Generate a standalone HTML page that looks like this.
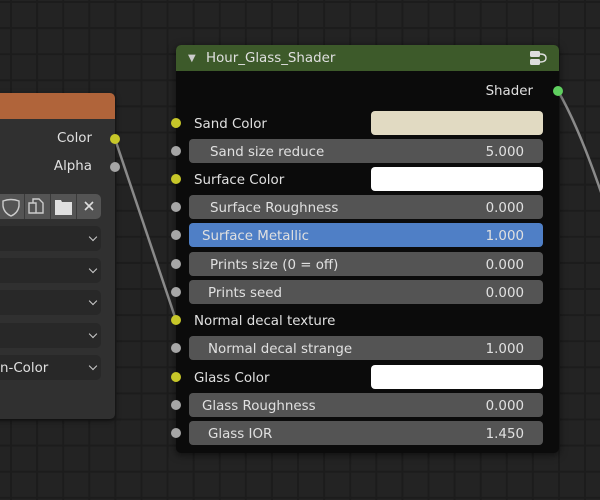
<!DOCTYPE html>
<html><head><style>
*{margin:0;padding:0;box-sizing:border-box}
body{width:600px;height:500px;overflow:hidden;position:relative;font-family:"DejaVu Sans","Liberation Sans",sans-serif;font-size:13.4px;color:#e0e0e0;
background-color:#232323;
background-image:linear-gradient(to right,#1c1c1c 2px,transparent 2px),linear-gradient(to bottom,#1c1c1c 2px,transparent 2px);
background-size:26.1px 26.1px;background-position:10px 1px}
.abs{position:absolute}
.sock{position:absolute;width:10px;height:10px;border-radius:50%;background:#a6a6a6}
.y{background:#c7c729}
.f{position:absolute;left:189px;width:354px;height:24px;border-radius:4px;background:#545454;line-height:27px}
.f .l{position:absolute;left:21px}
.f .v{position:absolute;right:19px}
.lab{position:absolute;left:194px;line-height:27px}
.sw{position:absolute;left:371px;width:172px;height:24px;border-radius:4px;background:#fff}
.dd{position:absolute;left:-6px;width:107px;height:25px;border-radius:5px;background:#282828;line-height:27px}
.dd:after{content:"";position:absolute;right:5px;top:8px;width:5px;height:5px;border-right:1.6px solid #ccc;border-bottom:1.6px solid #ccc;transform:rotate(45deg)}
</style></head><body>
<svg class="abs" style="left:0;top:0" width="600" height="500">
<path d="M115 139 L176 320" stroke="#8a8a8a" stroke-width="2.5" fill="none"/>
<path d="M558 91 C575 120 590 160 602 195" stroke="#8a8a8a" stroke-width="2.5" fill="none"/>
</svg>
<div class="abs" style="left:-10px;top:93px;width:125px;height:326px;background:#303030;border-radius:5px;box-shadow:0 2px 6px rgba(0,0,0,.5)"></div>
<div class="abs" style="left:-10px;top:93px;width:125px;height:26px;background:#b0643a;border-radius:5px 5px 0 0"></div>
<div class="abs" style="right:508px;top:131px">Color</div>
<div class="abs" style="right:508px;top:159px">Alpha</div>
<div class="sock y" style="left:110px;top:134px"></div>
<div class="sock" style="left:110px;top:162px"></div>
<div class="abs" style="left:-6px;top:194px;width:107px;height:25px;background:#545454;border-radius:5px"></div>
<div class="abs" style="left:24px;top:194px;width:1px;height:25px;background:#3a3a3a"></div>
<div class="abs" style="left:50px;top:194px;width:1px;height:25px;background:#3a3a3a"></div>
<div class="abs" style="left:76px;top:194px;width:1px;height:25px;background:#3a3a3a"></div>
<svg class="abs" style="left:0;top:194px" width="101" height="25">
<path d="M3 7 Q11 4 19 7 L19 12 Q18 19 11 22 Q4 19 3 12Z" stroke="#ccc" stroke-width="1.4" fill="none"/>
<path d="M29 9 h7 v10 h-7z M33 9 v-4 h6 l4 4 v10 h-7" stroke="#ccc" stroke-width="1.4" fill="none"/>
<path d="M55 6 h6 l1 2 h10 v13 h-17z" fill="#e0e0e0"/>
<path d="M85 8 l8 8 M93 8 l-8 8" stroke="#ddd" stroke-width="1.6"/>
</svg>
<div class="dd" style="top:226px"></div>
<div class="dd" style="top:258px"></div>
<div class="dd" style="top:290px"></div>
<div class="dd" style="top:323px"></div>
<div class="dd" style="top:355px"><span style="position:absolute;left:6px">n-Color</span></div>
<div class="abs" style="left:176px;top:45px;width:383px;height:408px;background:#0b0b0b;border-radius:5px;box-shadow:0 2px 8px rgba(0,0,0,.6)"></div>
<div class="abs" style="left:176px;top:45px;width:383px;height:26px;background:#3d5a2a;border-radius:5px 5px 0 0;line-height:28px">
<span style="position:absolute;left:12px;font-size:10px;color:#ccc">▼</span>
<span style="position:absolute;left:30px">Hour_Glass_Shader</span>
<svg style="position:absolute;left:352px;top:4px" width="20" height="18"><rect x="2" y="2" width="10" height="6" rx="1.5" fill="#ddd"/><rect x="2" y="10" width="10" height="6" rx="1.5" fill="#ddd"/><path d="M12 5 q6 0 6 4 q0 4 -6 4" stroke="#ddd" stroke-width="1.4" fill="none"/></svg>
</div>
<div class="abs" style="right:67px;top:84px">Shader</div>
<div class="sock" style="left:553px;top:86px;background:#5fcf5f"></div>

<div class="sock y" style="left:171px;top:118px"></div><div class="lab" style="top:111px">Sand Color</div><div class="sw" style="top:111px;background:#e1dac2"></div>
<div class="sock" style="left:171px;top:146px"></div><div class="f" style="top:139px"><span class="l">Sand size reduce</span><span class="v">5.000</span></div>
<div class="sock y" style="left:171px;top:174px"></div><div class="lab" style="top:167px">Surface Color</div><div class="sw" style="top:167px"></div>
<div class="sock" style="left:171px;top:202px"></div><div class="f" style="top:195px"><span class="l">Surface Roughness</span><span class="v">0.000</span></div>
<div class="sock" style="left:171px;top:230px"></div><div class="f" style="top:223px;background:#4f7fc6"><span class="l" style="left:13px">Surface Metallic</span><span class="v">1.000</span></div>
<div class="sock" style="left:171px;top:259px"></div><div class="f" style="top:252px"><span class="l">Prints size (0 = off)</span><span class="v">0.000</span></div>
<div class="sock" style="left:171px;top:287px"></div><div class="f" style="top:280px"><span class="l" style="left:19px">Prints seed</span><span class="v">0.000</span></div>
<div class="sock y" style="left:171px;top:315px"></div><div class="lab" style="top:308px">Normal decal texture</div>
<div class="sock" style="left:171px;top:343px"></div><div class="f" style="top:336px"><span class="l" style="left:19px">Normal decal strange</span><span class="v">1.000</span></div>
<div class="sock y" style="left:171px;top:372px"></div><div class="lab" style="top:365px">Glass Color</div><div class="sw" style="top:365px"></div>
<div class="sock" style="left:171px;top:400px"></div><div class="f" style="top:393px"><span class="l" style="left:13px">Glass Roughness</span><span class="v">0.000</span></div>
<div class="sock" style="left:171px;top:428px"></div><div class="f" style="top:421px"><span class="l" style="left:19px">Glass IOR</span><span class="v">1.450</span></div>
</body></html>
